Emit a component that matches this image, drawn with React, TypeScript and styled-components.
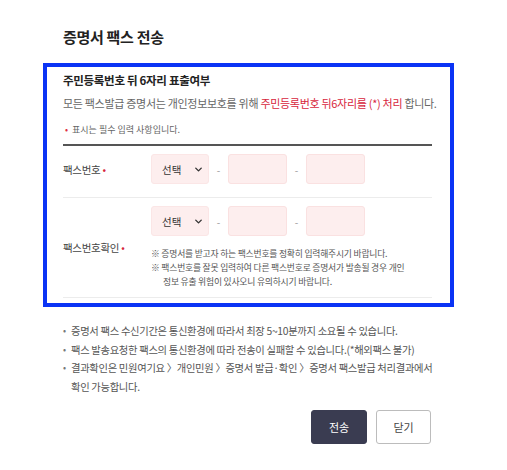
import styled, { createGlobalStyle } from 'styled-components';
import { ChevronDown } from 'lucide-react';

const GlobalStyle = createGlobalStyle`
  html, body {
    margin: 0;
    padding: 0;
    background: #fff;
  }
  body {
    font-family: "Noto Sans CJK KR", "Noto Sans", sans-serif;
    color: #333;
  }
`;

const Wrapper = styled.div`
  width: 411px;
  padding: 25px 0 0 43px;
`;

const Title = styled.h2`
  margin: 0 0 14px 20px;
  font-size: 15px;
  line-height: 24px;
  font-weight: 700;
  color: #222;
  letter-spacing: -0.3px;
`;

const Highlight = styled.section`
  border: 4px solid #0a33f5;
  padding: 4px 18px 5px 16px;
`;

const SubTitle = styled.h3`
  margin: 0;
  font-size: 11.5px;
  line-height: 18px;
  font-weight: 700;
  color: #222;
  letter-spacing: -0.3px;
`;

const Desc = styled.p`
  margin: 5px 0 0;
  font-size: 11px;
  line-height: 18px;
  color: #666;
  letter-spacing: -0.3px;
  white-space: nowrap;
`;

const Red = styled.span`
  color: #d7263d;
`;

const Required = styled.p`
  margin: 11px 0 0;
  padding-bottom: 7px;
  font-size: 9px;
  line-height: 14px;
  color: #666;
  border-bottom: 2px solid #555;
`;

const Dot = styled.span`
  color: #e0303f;
  margin: 0 4px 0 2px;
`;

const Row = styled.div<{ $tall?: boolean }>`
  display: grid;
  grid-template-columns: 88px 1fr;
  align-items: center;
  padding: ${(p) => (p.$tall ? '8px 0 8px' : '8px 0 13px')};
  border-bottom: 1px solid #ececec;
`;

const Label = styled.span`
  font-size: 10.5px;
  color: #444;
  letter-spacing: -0.3px;
`;

const Field = styled.div`
  display: flex;
  flex-direction: column;
  gap: 11px;
`;

const Inputs = styled.div`
  display: flex;
  align-items: center;
`;

const SelectBox = styled.div`
  width: 58px;
  height: 30px;
  box-sizing: border-box;
  display: flex;
  align-items: center;
  justify-content: space-between;
  padding: 0 4px 0 10px;
  background: #fdeeee;
  border: 1px solid #fbe6e6;
  border-radius: 3px;
  font-size: 10.5px;
  color: #333;
`;

const Input = styled.input`
  width: 59px;
  height: 30px;
  box-sizing: border-box;
  background: #fdeeee;
  border: 1px solid #fae1e1;
  border-radius: 3px;
  outline: none;
`;

const Dash = styled.span`
  width: 19px;
  text-align: center;
  font-size: 10px;
  color: #999;
`;

const Notes = styled.ul`
  list-style: none;
  margin: 0;
  padding: 0;
  font-size: 8.8px;
  line-height: 14px;
  color: #555;
  letter-spacing: -0.2px;
  white-space: nowrap;
`;

const Note = styled.li`
  padding-left: 12px;
  text-indent: -12px;
`;

const Info = styled.ul`
  list-style: none;
  margin: 15px 0 0;
  padding: 0 0 0 20px;
  font-size: 10.3px;
  line-height: 18.5px;
  color: #555;
  letter-spacing: -0.3px;
`;

const InfoItem = styled.li`
  position: relative;
  padding-left: 8px;
  &::before {
    content: '•';
    position: absolute;
    left: 0;
    color: #777;
    font-size: 9px;
  }
`;

const Buttons = styled.div`
  display: flex;
  justify-content: flex-end;
  gap: 9px;
  margin-top: 14px;
  padding-right: 23px;
`;

const Button = styled.button<{ $primary?: boolean }>`
  height: 34px;
  width: ${(p) => (p.$primary ? '56px' : '55px')};
  border-radius: 3px;
  font-family: inherit;
  font-size: 11px;
  cursor: pointer;
  border: 1px solid ${(p) => (p.$primary ? '#3a3c51' : '#bcbcbc')};
  background: ${(p) => (p.$primary ? '#3a3c51' : '#fff')};
  color: ${(p) => (p.$primary ? '#fff' : '#444')};
`;

function PhoneInputs() {
  return (
    <Inputs>
      <SelectBox>
        <span>선택</span>
        <ChevronDown size={11} strokeWidth={3} color="#333" />
      </SelectBox>
      <Dash>-</Dash>
      <Input />
      <Dash>-</Dash>
      <Input />
    </Inputs>
  );
}

export default function App() {
  return (
    <Wrapper>
      <GlobalStyle />
      <Title>증명서 팩스 전송</Title>
      <Highlight>
        <SubTitle>주민등록번호 뒤 6자리 표출여부</SubTitle>
        <Desc>
          모든 팩스발급 증명서는 개인정보보호를 위해 <Red>주민등록번호 뒤6자리를 (*) 처리</Red> 합니다.
        </Desc>
        <Required>
          <Dot>•</Dot>표시는 필수 입력 사항입니다.
        </Required>
        <Row>
          <Label>
            팩스번호 <Red>•</Red>
          </Label>
          <PhoneInputs />
        </Row>
        <Row $tall>
          <Label>
            팩스번호확인 <Red>•</Red>
          </Label>
          <Field>
            <PhoneInputs />
            <Notes>
              <Note>※ 증명서를 받고자 하는 팩스번호를 정확히 입력해주시기 바랍니다.</Note>
              <Note>
                ※ 팩스번호를 잘못 입력하여 다른 팩스번호로 증명서가 발송될 경우 개인
                <br />
                정보 유출 위험이 있사오니 유의하시기 바랍니다.
              </Note>
            </Notes>
          </Field>
        </Row>
      </Highlight>
      <Info>
        <InfoItem>증명서 팩스 수신기간은 통신환경에 따라서 최장 5~10분까지 소요될 수 있습니다.</InfoItem>
        <InfoItem>팩스 발송요청한 팩스의 통신환경에 따라 전송이 실패할 수 있습니다.(*해외팩스 불가)</InfoItem>
        <InfoItem>
          결과확인은 민원여기요 〉개인민원 〉증명서 발급·확인 〉증명서 팩스발급 처리결과에서
          <br />
          확인 가능합니다.
        </InfoItem>
      </Info>
      <Buttons>
        <Button $primary>전송</Button>
        <Button>닫기</Button>
      </Buttons>
    </Wrapper>
  );
}
